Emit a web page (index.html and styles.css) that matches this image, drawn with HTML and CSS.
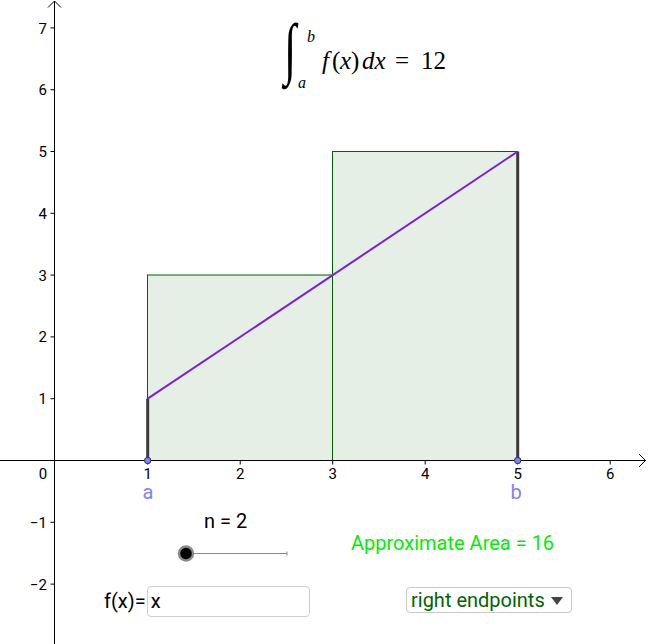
FILE: index.html
```html
<!DOCTYPE html>
<html>
<head>
<meta charset="utf-8">
<link rel="stylesheet" href="styles.css">
</head>
<body>
<div class="stage">
  <svg class="graph" width="650" height="644" viewBox="0 0 650 644">
    <!-- rectangles -->
    <rect class="bar" x="147.5" y="275" width="185" height="185.5"/>
    <rect class="bar" x="332.5" y="151.5" width="185" height="309"/>
    <!-- axes -->
    <line class="axis" x1="0" y1="460.5" x2="646" y2="460.5"/>
    <line class="axis" x1="54.5" y1="1" x2="54.5" y2="644"/>
    <polyline class="axis" points="639,454 645.5,460.5 639,467"/>
    <polyline class="axis" points="48,7.5 54.5,1 61,7.5"/>
    <!-- ticks -->
    <g class="ticks">
      <line x1="147.7" y1="460.5" x2="147.7" y2="464.5"/>
      <line x1="240.2" y1="460.5" x2="240.2" y2="464.5"/>
      <line x1="332.7" y1="460.5" x2="332.7" y2="464.5"/>
      <line x1="425.2" y1="460.5" x2="425.2" y2="464.5"/>
      <line x1="517.7" y1="460.5" x2="517.7" y2="464.5"/>
      <line x1="610.2" y1="460.5" x2="610.2" y2="464.5"/>
      <line x1="50.5" y1="398.7" x2="54.5" y2="398.7"/>
      <line x1="50.5" y1="336.9" x2="54.5" y2="336.9"/>
      <line x1="50.5" y1="275.1" x2="54.5" y2="275.1"/>
      <line x1="50.5" y1="213.3" x2="54.5" y2="213.3"/>
      <line x1="50.5" y1="151.5" x2="54.5" y2="151.5"/>
      <line x1="50.5" y1="89.7" x2="54.5" y2="89.7"/>
      <line x1="50.5" y1="27.9" x2="54.5" y2="27.9"/>
      <line x1="50.5" y1="522.3" x2="54.5" y2="522.3"/>
      <line x1="50.5" y1="584.1" x2="54.5" y2="584.1"/>
    </g>
    <!-- tick labels -->
    <g class="xlab">
      <text x="147.7" y="479">1</text>
      <text x="240.2" y="479">2</text>
      <text x="332.7" y="479">3</text>
      <text x="425.2" y="479">4</text>
      <text x="517.7" y="479">5</text>
      <text x="610.2" y="479">6</text>
      <text x="43" y="479">0</text>
    </g>
    <g class="ylab">
      <text x="47" y="404">1</text>
      <text x="47" y="342">2</text>
      <text x="47" y="280.5">3</text>
      <text x="47" y="218.5">4</text>
      <text x="47" y="157">5</text>
      <text x="47" y="95">6</text>
      <text x="47" y="33.5">7</text>
      <text x="47" y="527.5">−1</text>
      <text x="47" y="589.5">−2</text>
    </g>
    <!-- sample lines -->
    <line class="sample" x1="147.7" y1="460.5" x2="147.7" y2="398.7"/>
    <line class="sample" x1="517.7" y1="460.5" x2="517.7" y2="151.5"/>
    <!-- function -->
    <line class="func" x1="147.7" y1="398.7" x2="517.7" y2="151.5"/>
    <!-- points -->
    <circle class="pt" cx="147.7" cy="460.5" r="3.2"/>
    <circle class="pt" cx="517.7" cy="460.5" r="3.2"/>
    <text class="ptlab" x="148" y="499">a</text>
    <text class="ptlab" x="516" y="499">b</text>
    <!-- formula -->
    <text class="intsign" transform="translate(284 71) scale(1 1.55)">∫</text>
    <text class="limit" x="307" y="42">b</text>
    <text class="limit" x="298" y="88">a</text>
    <g class="formula">
      <text class="it" x="322" y="69">f</text>
      <text x="332" y="69">(</text>
      <text class="it" x="340" y="69">x</text>
      <text x="351" y="69">)</text>
      <text class="it" x="362" y="69">dx</text>
      <text x="395" y="69">=</text>
      <text x="421" y="69">12</text>
    </g>
    <!-- slider -->
    <text class="ntext" x="204" y="528">n = 2</text>
    <line class="track" x1="190" y1="553.5" x2="287" y2="553.5"/>
    <line class="track" x1="287" y1="551.5" x2="287" y2="555.5"/>
    <circle class="knob" cx="186" cy="553.5" r="7"/>
    <text class="area" x="351" y="550">Approximate Area = 16</text>
  </svg>
  <div class="fx">
    <span class="fx-label">f(x)=</span>
    <div class="fx-input">x</div>
  </div>
  <div class="dropdown">
    <span>right endpoints</span>
    <span class="caret"></span>
  </div>
</div>
</body>
</html>
```

FILE: styles.css
```css
html, body {
  margin: 0;
  padding: 0;
  background: #ffffff;
}
.stage {
  position: relative;
  width: 650px;
  height: 644px;
  overflow: hidden;
  font-family: Roboto, "Liberation Sans", sans-serif;
}
.graph {
  display: block;
}
.bar {
  fill: #e5efe5;
  stroke: #006400;
  stroke-width: 1;
}
.axis {
  fill: none;
  stroke: #000;
  stroke-width: 1;
}
.ticks line {
  stroke: #000;
  stroke-width: 1;
}
.xlab text {
  font-family: Roboto, "Liberation Sans", sans-serif;
  font-size: 15px;
  text-anchor: middle;
  fill: #000;
}
.ylab text {
  font-family: Roboto, "Liberation Sans", sans-serif;
  font-size: 15px;
  text-anchor: end;
  fill: #000;
}
.sample {
  stroke: #3a3a3a;
  stroke-width: 3;
}
.func {
  stroke: #7a1fe0;
  stroke-width: 2;
}
.pt {
  fill: #7f7fff;
  stroke: #333;
  stroke-width: 1;
}
.ptlab {
  font-family: Roboto, "Liberation Sans", sans-serif;
  font-size: 20px;
  fill: #7f7fff;
  text-anchor: middle;
}
.intsign {
  font-family: "Liberation Serif", serif;
  font-style: italic;
  font-size: 44px;
  fill: #000;
}
.limit {
  font-family: "Liberation Serif", serif;
  font-style: italic;
  font-size: 16px;
  fill: #000;
}
.formula text {
  font-family: "Liberation Serif", serif;
  font-size: 25px;
  fill: #000;
}
.formula text.it {
  font-style: italic;
}
.ntext {
  font-family: Roboto, "Liberation Sans", sans-serif;
  font-size: 20px;
  fill: #000;
}
.track {
  stroke: #888;
  stroke-width: 1;
}
.knob {
  fill: #000;
  stroke: #8a8a8a;
  stroke-width: 2.5;
}
.area {
  font-family: Roboto, "Liberation Sans", sans-serif;
  font-size: 20px;
  fill: #00ee00;
}
.fx {
  position: absolute;
  left: 104px;
  top: 586px;
  display: flex;
  align-items: center;
  gap: 1px;
}
.fx-label {
  font-size: 20px;
  color: #000;
  line-height: 31px;
}
.fx-input {
  box-sizing: border-box;
  width: 163px;
  height: 31px;
  border: 1px solid #cfcfcf;
  border-radius: 4px;
  padding-left: 3px;
  font-size: 20px;
  line-height: 29px;
  color: #000;
}
.dropdown {
  position: absolute;
  left: 406px;
  top: 587px;
  box-sizing: border-box;
  width: 166px;
  height: 26px;
  border: 1px solid #c8c8c8;
  border-radius: 4px;
  display: flex;
  align-items: center;
  padding-left: 4px;
  gap: 6px;
  font-size: 20px;
  color: #006400;
  line-height: 24px;
}
.caret {
  width: 0;
  height: 0;
  border-left: 6px solid transparent;
  border-right: 6px solid transparent;
  border-top: 8px solid #444;
  margin-top: 1px;
}
```
